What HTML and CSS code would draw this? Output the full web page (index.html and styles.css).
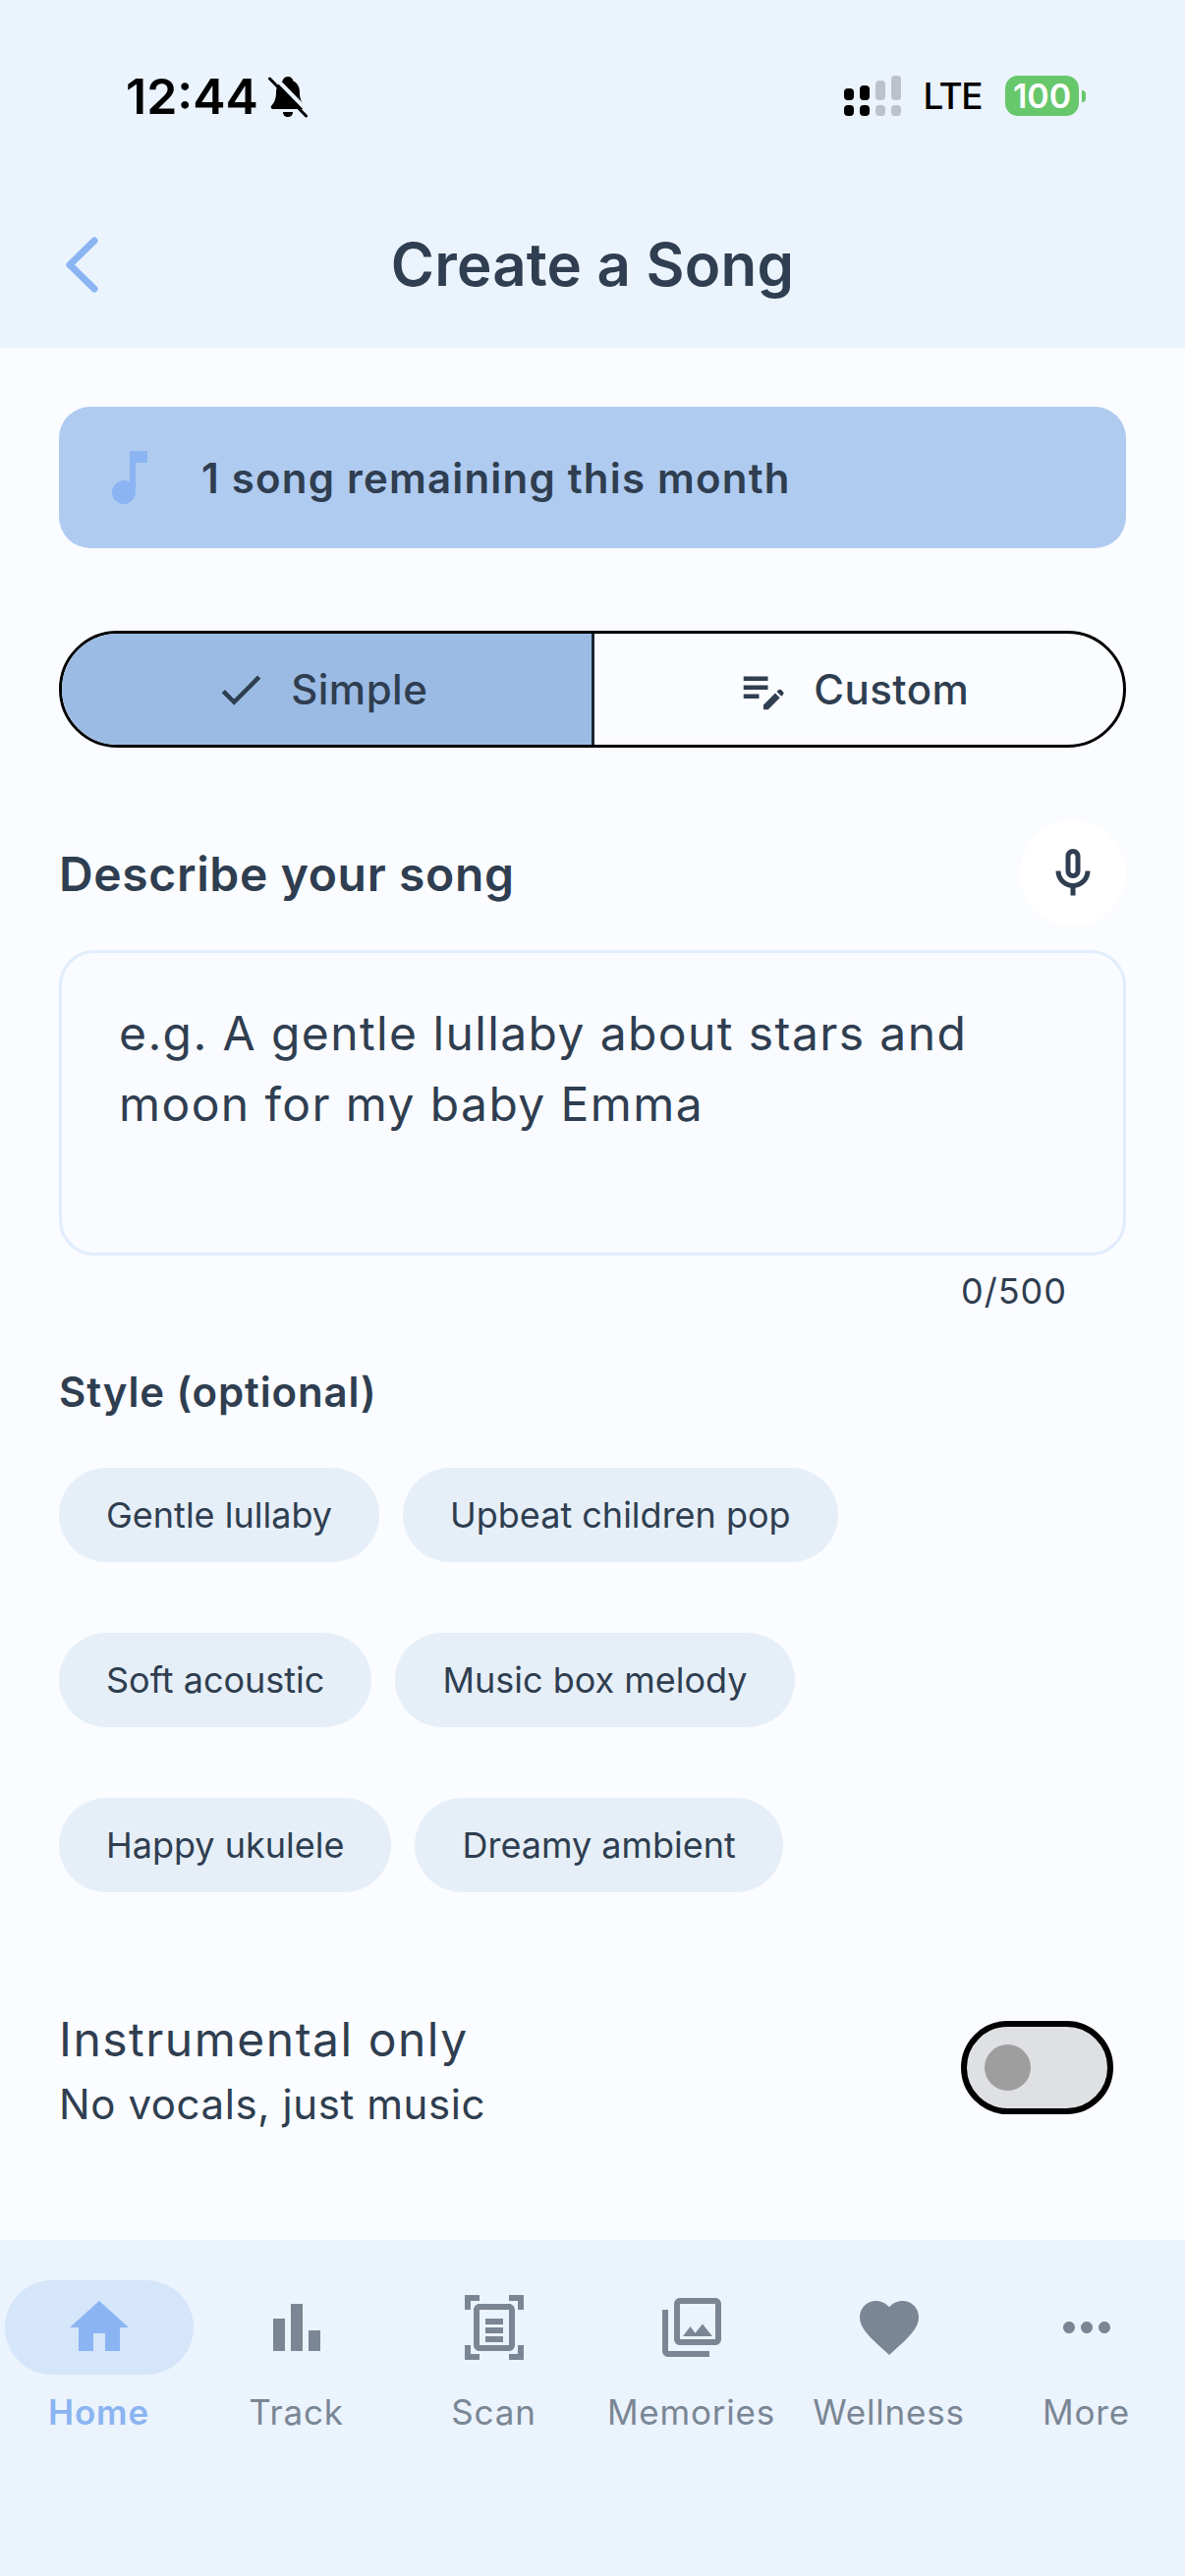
FILE: index.html
```html
<!DOCTYPE html>
<html lang="en">
<head>
  <meta charset="UTF-8">
  <meta name="viewport" content="width=device-width, initial-scale=1.0">
  <title>Create a Song</title>
  <link rel="stylesheet" href="styles.css">
</head>
<body>
  <div class="screen">
    <header class="top">
      <div class="status">
        <div class="status-left">
          <span class="clock">12:44</span>
          <svg class="bell" viewBox="0 0 40 43">
            <path class="bell-body" d="M20 1c3 0 5 2 5.500 4.500C30 7.500 32 12 32 17c0 6 1.500 10 5 14 1 1.500 0 3-2 3H5c-2 0-3-1.500-2-3 3.500-4 5-8 5-14 0-5 2-9.500 6.500-11.500C15 3 17 1 20 1zM15 37h10c0 3-2 5-5 5s-5-2-5-5z"/>
            <path class="bell-gap" d="M4 -1l38 39"/>
            <path class="bell-slash" d="M1.500 3l37 38"/>
          </svg>
        </div>
        <div class="status-right">
          <svg class="signal" viewBox="0 0 58 41">
            <rect class="sig-on" x="0" y="13" width="10" height="12" rx="4"/>
            <rect class="sig-on" x="0" y="30" width="10" height="11" rx="4"/>
            <rect class="sig-on" x="16" y="10" width="10" height="15" rx="4"/>
            <rect class="sig-on" x="16" y="30" width="10" height="11" rx="4"/>
            <rect class="sig-off" x="32" y="5" width="10" height="20" rx="4"/>
            <rect class="sig-off" x="32" y="30" width="10" height="11" rx="4"/>
            <rect class="sig-off" x="48" y="0" width="10" height="25" rx="4"/>
            <rect class="sig-off" x="48" y="30" width="10" height="11" rx="4"/>
          </svg>
          <span class="lte">LTE</span>
          <div class="battery">
            <span class="battery-body">100</span>
            <span class="battery-nub"></span>
          </div>
        </div>
      </div>
      <div class="titlebar">
        <svg class="back" viewBox="0 0 33 57"><path d="M29 4L4 28.500 29 53"/></svg>
        <h1>Create a Song</h1>
      </div>
    </header>

    <main class="content">
      <div class="banner">
        <svg class="icon icon-blue" viewBox="0 0 24 24"><path d="M12 3v10.550c-.59-.34-1.270-.55-2-.55-2.210 0-4 1.790-4 4s1.790 4 4 4 4-1.790 4-4V7h4V3h-6z"/></svg>
        <span>1 song remaining this month</span>
      </div>

      <div class="mode">
        <div class="mode-btn selected">
          <svg class="icon-sm" viewBox="0 0 24 24"><path d="M9 16.170L4.830 12l-1.420 1.410L9 19 21 7l-1.410-1.410z"/></svg>
          <span>Simple</span>
        </div>
        <div class="mode-btn">
          <svg class="icon-sm" viewBox="0 0 24 24"><path d="M3 10h11v2H3zm0-4h11v2H3zm0 8h7v2H3zm15.010-1.130.71-.71c.39-.39 1.020-.39 1.410 0l.71.71c.39.39.39 1.020 0 1.410l-.71.71zm-.71.71-5.300 5.300V21h2.120l5.300-5.300z"/></svg>
          <span>Custom</span>
        </div>
      </div>

      <div class="describe">
        <h2>Describe your song</h2>
        <div class="mic">
          <svg class="icon-mic" viewBox="0 0 24 24"><path d="M12 14c1.660 0 3-1.340 3-3V5c0-1.660-1.340-3-3-3S9 3.340 9 5v6c0 1.660 1.340 3 3 3zm-1-9c0-.55.45-1 1-1s1 .45 1 1v6c0 .55-.45 1-1 1s-1-.45-1-1V5zm6 6c0 2.760-2.240 5-5 5s-5-2.240-5-5H5c0 3.530 2.610 6.430 6 6.920V21h2v-3.080c3.390-.49 6-3.390 6-6.920h-2z"/></svg>
        </div>
      </div>
      <div class="textbox">e.g. A gentle lullaby about stars and moon for my baby Emma</div>
      <div class="count">0/500</div>

      <h3>Style (optional)</h3>
      <div class="chips">
        <div class="chip-row"><span class="chip">Gentle lullaby</span><span class="chip">Upbeat children pop</span></div>
        <div class="chip-row"><span class="chip">Soft acoustic</span><span class="chip">Music box melody</span></div>
        <div class="chip-row"><span class="chip">Happy ukulele</span><span class="chip">Dreamy ambient</span></div>
      </div>

      <div class="instrumental">
        <div>
          <div class="inst-title">Instrumental only</div>
          <div class="inst-sub">No vocals, just music</div>
        </div>
        <div class="switch"><span class="thumb"></span></div>
      </div>
    </main>

    <nav class="tabs">
      <div class="tab active">
        <div class="tab-icon"><svg class="icon" viewBox="0 0 24 24"><path d="M10 20v-6h4v6h5v-8h3L12 3 2 12h3v8z"/></svg></div>
        <span>Home</span>
      </div>
      <div class="tab">
        <div class="tab-icon"><svg class="icon" viewBox="0 0 24 24"><path d="M4 9h4v11H4zM10 4h4v16h-4zM16 13h4v7h-4z"/></svg></div>
        <span>Track</span>
      </div>
      <div class="tab">
        <div class="tab-icon"><svg class="icon" viewBox="0 0 24 24"><path d="M7 3H4v3H2V1h5v2zm15 3V1h-5v2h3v3h2zM7 21H4v-3H2v5h5v-2zm13-3v3h-3v2h5v-5h-2zm-1 0c0 1.100-.9 2-2 2H7c-1.100 0-2-.9-2-2V6c0-1.100.9-2 2-2h10c1.100 0 2 .9 2 2v12zM17 6H7v12h10V6zM9 9h6v2H9V9zm0 3h6v2H9v-2zm0 3h6v2H9v-2z"/></svg></div>
        <span>Scan</span>
      </div>
      <div class="tab">
        <div class="tab-icon"><svg class="icon" viewBox="0 0 24 24"><path d="M20 4v12H8V4h12m0-2H8c-1.100 0-2 .9-2 2v12c0 1.100.9 2 2 2h12c1.100 0 2-.9 2-2V4c0-1.100-.9-2-2-2zm-8.500 9.670 1.690 2.260 2.480-3.100L19 15H9zM2 6v14c0 1.100.9 2 2 2h14v-2H4V6H2z"/></svg></div>
        <span>Memories</span>
      </div>
      <div class="tab">
        <div class="tab-icon"><svg class="icon" viewBox="0 0 24 24"><path d="M12 21.350l-1.450-1.320C5.400 15.360 2 12.280 2 8.500 2 5.420 4.420 3 7.500 3c1.740 0 3.410.81 4.500 2.090C13.090 3.810 14.760 3 16.500 3 19.580 3 22 5.420 22 8.500c0 3.780-3.400 6.860-8.550 11.540L12 21.350z"/></svg></div>
        <span>Wellness</span>
      </div>
      <div class="tab">
        <div class="tab-icon"><svg class="icon" viewBox="0 0 24 24"><path d="M6 10c-1.100 0-2 .9-2 2s.9 2 2 2 2-.9 2-2-.9-2-2-2zm12 0c-1.100 0-2 .9-2 2s.9 2 2 2 2-.9 2-2-.9-2-2-2zm-6 0c-1.100 0-2 .9-2 2s.9 2 2 2 2-.9 2-2-.9-2-2-2z"/></svg></div>
        <span>More</span>
      </div>
    </nav>
  </div>
</body>
</html>
```

FILE: styles.css
```css
* {
  box-sizing: border-box;
}

body {
  margin: 0;
  font-family: Inter, "Liberation Sans", sans-serif;
  font-weight: 400;
  color: #2f3e50;
  background-color: #fafcff;
}

.screen {
  width: 1206px;
  height: 2622px;
  display: flex;
  flex-direction: column;
  overflow: hidden;
}

/* status bar + title */
.top {
  height: 354px;
  background-color: #ebf3fd;
}

.status {
  height: 160px;
  padding: 77px 101px 0 128px;
  display: flex;
  justify-content: space-between;
  align-items: flex-start;
}

.status-left {
  display: flex;
  align-items: center;
  height: 42px;
}

.clock {
  font-size: 50px;
  font-weight: 600;
  line-height: 42px;
  color: #000;
}

.bell {
  width: 40px;
  height: 43px;
  margin-left: 10px;
}

.bell-body {
  fill: #000;
}

.bell-gap {
  stroke: #ebf3fd;
  stroke-width: 4;
}

.bell-slash {
  stroke: #000;
  stroke-width: 3;
  stroke-linecap: round;
}

.status-right {
  display: flex;
  align-items: center;
  height: 41px;
}

.signal {
  width: 58px;
  height: 41px;
}

.sig-on {
  fill: #000;
}

.sig-off {
  fill: #bcc1cc;
}

.lte {
  margin-left: 23px;
  font-size: 37px;
  font-weight: 500;
  letter-spacing: -1.5px;
  color: #000;
}

.battery {
  margin-left: 24px;
  display: flex;
  align-items: center;
}

.battery-body {
  width: 75px;
  height: 41px;
  border-radius: 13px;
  background-color: #67c76b;
  color: #fff;
  font-size: 34px;
  font-weight: 600;
  line-height: 41px;
  text-align: center;
}

.battery-nub {
  width: 4px;
  height: 12px;
  margin-left: 3px;
  border-radius: 0 6px 6px 0;
  background-color: #67c76b;
}

.titlebar {
  position: relative;
  height: 194px;
  display: flex;
  justify-content: center;
  padding-top: 74px;
}

.back {
  position: absolute;
  left: 67px;
  top: 81px;
  width: 33px;
  height: 57px;
  fill: none;
  stroke: #8bb4f2;
  stroke-width: 7;
  stroke-linecap: round;
  stroke-linejoin: round;
}

h1 {
  margin: 0;
  font-size: 60px;
  font-weight: 600;
  line-height: 70px;
  letter-spacing: 0.2px;
  color: #2f3e50;
}

/* main area */
.content {
  flex: 1;
  padding: 60px 60px 0;
}

.icon {
  width: 72px;
  height: 72px;
  display: block;
  fill: currentColor;
}

.icon-blue {
  color: #8bb4f2;
}

.icon-sm {
  width: 54px;
  height: 54px;
  fill: #2f3e50;
}

.banner {
  height: 144px;
  padding-left: 36px;
  display: flex;
  align-items: center;
  gap: 37px;
  border-radius: 32px;
  background-color: #b0cbf0;
  font-size: 42px;
  font-weight: 600;
  letter-spacing: 1.2px;
}

.mode {
  margin-top: 84px;
  height: 119px;
  display: flex;
  border: 3px solid #000;
  border-radius: 60px;
  overflow: hidden;
}

.mode-btn {
  flex: 1;
  display: flex;
  align-items: center;
  justify-content: center;
  gap: 24px;
  padding-right: 11px;
  font-size: 42px;
  font-weight: 500;
  letter-spacing: 0.5px;
}

.mode-btn.selected {
  background-color: #9bbbe4;
  border-right: 3px solid #1d2733;
}

.describe {
  margin-top: 74px;
  height: 108px;
  display: flex;
  align-items: center;
  justify-content: space-between;
}

h2 {
  margin: 0;
  font-size: 48px;
  font-weight: 600;
  letter-spacing: 0.65px;
}

.mic {
  width: 108px;
  height: 108px;
  border-radius: 50%;
  background-color: #fff;
  display: flex;
  align-items: center;
  justify-content: center;
}

.icon-mic {
  width: 60px;
  height: 60px;
  fill: #2f3e50;
}

.textbox {
  margin-top: 24px;
  height: 311px;
  padding: 46px 58px 0;
  border: 3px solid #e1edfd;
  border-radius: 36px;
  background-color: #f9fbff;
  font-size: 48px;
  line-height: 72px;
  letter-spacing: 1.4px;
}

.count {
  margin-top: 14px;
  padding-right: 60px;
  text-align: right;
  font-size: 36px;
  line-height: 44px;
  letter-spacing: 1px;
}

h3 {
  margin: 51px 0 0;
  font-size: 42px;
  font-weight: 600;
  line-height: 60px;
  letter-spacing: 0.85px;
}

.chips {
  margin-top: 47px;
  display: flex;
  flex-direction: column;
  gap: 72px;
}

.chip-row {
  display: flex;
  gap: 24px;
}

.chip {
  height: 96px;
  padding: 0 48px;
  display: flex;
  align-items: center;
  border-radius: 48px;
  background-color: #e6eff8;
  font-size: 36px;
}

.instrumental {
  margin-top: 117px;
  padding-right: 13px;
  display: flex;
  align-items: flex-start;
  justify-content: space-between;
}

.inst-title {
  font-size: 48px;
  line-height: 66px;
  letter-spacing: 1.5px;
}

.inst-sub {
  font-size: 42px;
  line-height: 66px;
  letter-spacing: 0.6px;
}

.switch {
  position: relative;
  width: 155px;
  height: 95px;
  margin-top: 14px;
  border: 6px solid #000;
  border-radius: 48px;
  background-color: #dfe0e4;
}

.thumb {
  position: absolute;
  left: 18px;
  top: 18px;
  width: 47px;
  height: 47px;
  border-radius: 50%;
  background-color: #9e9e9e;
}

/* bottom tabs */
.tabs {
  height: 342px;
  padding-top: 41px;
  display: grid;
  grid-template-columns: repeat(6, 1fr);
  align-items: start;
  background-color: #ebf3fd;
}

.tab {
  display: flex;
  flex-direction: column;
  align-items: center;
  color: #7a8694;
  font-size: 35px;
  letter-spacing: 0.8px;
}

.tab-icon {
  width: 192px;
  height: 96px;
  margin-bottom: 17px;
  display: flex;
  align-items: center;
  justify-content: center;
  border-radius: 48px;
}

.tab.active {
  color: #8bb4f2;
  font-weight: 600;
  letter-spacing: 0.9px;
}

.tab.active .tab-icon {
  background-color: #d5e5fa;
}
```
